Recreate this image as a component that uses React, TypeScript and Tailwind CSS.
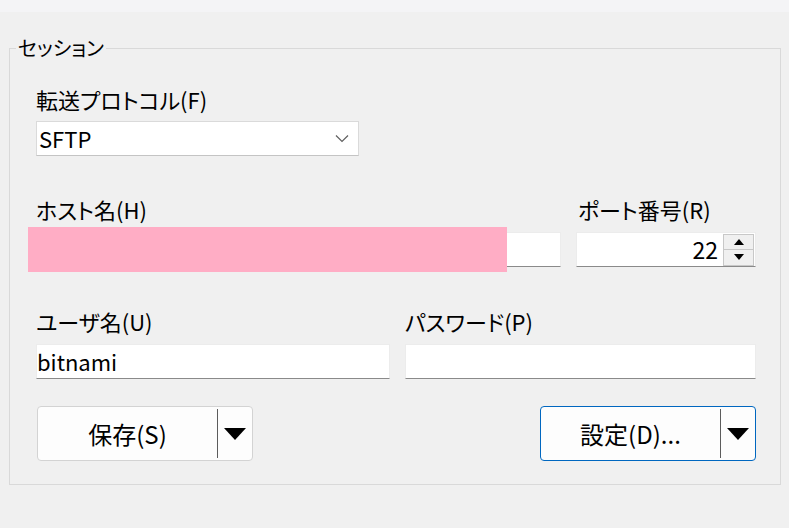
import React from "react";

const font = {
  fontFamily: '"Noto Sans CJK JP", "Noto Sans", sans-serif',
};

function Label({ children }: { children: React.ReactNode }) {
  return (
    <div className="h-[24px] whitespace-nowrap text-[22px] leading-[24px] text-black [font-feature-settings:'palt']">
      {children}
    </div>
  );
}

function TextBox({
  value,
  className,
}: {
  value?: string;
  className?: string;
}) {
  return (
    <div
      className={
        "flex h-[35px] items-center border border-[#ececec] border-b-[#8a8a8a] bg-white px-0 text-[22px] text-black " +
        (className ?? "")
      }
    >
      {value}
    </div>
  );
}

function SplitButton({
  label,
  focused,
}: {
  label: string;
  focused?: boolean;
}) {
  return (
    <button
      className={
        "flex h-[55px] w-[216px] items-stretch rounded-[4px] border bg-[#fdfdfd] " +
        (focused ? "border-[#0067c0]" : "border-[#d3d3d3]")
      }
    >
      <span className="flex flex-1 items-center justify-center text-[24px] text-black [font-feature-settings:'palt']">
        {label}
      </span>
      <span className="my-[2px] w-[1px] bg-[#5c5c5c]" />
      <span className="flex w-[34px] items-center justify-center">
        <svg width="22" height="12" viewBox="0 0 22 12">
          <path d="M0 0 H22 L11 12 Z" fill="#000" />
        </svg>
      </span>
    </button>
  );
}

export default function App() {
  return (
    <div className="h-[528px] w-[789px] overflow-hidden bg-[#f0f0f0]" style={font}>
      <div className="h-[12px] bg-[#f4f4f6]" />
      <fieldset className="mx-[9px] mt-[24px] w-[772px] border border-[#d9d9d9] p-0">
        <legend className="ml-[6px] px-[2px] text-[20px] leading-[24px] text-black [font-feature-settings:'palt']">
          セッション
        </legend>
        <div className="flex flex-col pb-[23px] pl-[26px] pr-[24px] pt-[27px]">
          <Label>転送プロトコル(F)</Label>
          <div className="mt-[10px] flex h-[35px] w-[323px] items-center justify-between border border-[#dadada] border-b-[#c4c4c4] bg-white pl-[2px] pr-[9px] text-[22px] text-black">
            <span>SFTP</span>
            <svg width="14" height="9" viewBox="0 0 14 9">
              <path d="M1 1.5 L7 7.5 L13 1.5" fill="none" stroke="#5f5f5f" strokeWidth="1.2" />
            </svg>
          </div>

          <div className="mt-[41px] flex gap-[15px]">
            <div className="flex w-[525px] flex-col gap-[11px]">
              <Label>ホスト名(H)</Label>
              <div className="relative">
                <TextBox />
                <div className="absolute left-[-8px] top-[-5px] h-[45px] w-[479px] bg-[#ffadc5]" />
              </div>
            </div>
            <div className="flex w-[180px] flex-col gap-[11px]">
              <div className="pl-[2px]">
                <Label>ポート番号(R)</Label>
              </div>
              <div className="flex h-[35px] items-center border border-[#ececec] border-b-[#8a8a8a] bg-white pr-[1px]">
                <span className="flex-1 pr-[5px] text-right text-[23px] text-black">22</span>
                <div className="flex w-[31px] flex-col">
                  <span className="flex h-[16px] items-center justify-center border border-[#c8c8c8] bg-[#f0f0f0]">
                    <svg width="10" height="6" viewBox="0 0 10 6">
                      <path d="M0 6 L5 0 L10 6 Z" fill="#000" />
                    </svg>
                  </span>
                  <span className="flex h-[16px] items-center justify-center border border-t-0 border-[#c8c8c8] bg-[#f0f0f0]">
                    <svg width="10" height="6" viewBox="0 0 10 6">
                      <path d="M0 0 L10 0 L5 6 Z" fill="#000" />
                    </svg>
                  </span>
                </div>
              </div>
            </div>
          </div>

          <div className="mt-[42px] flex gap-[15px]">
            <div className="flex w-[354px] flex-col gap-[11px]">
              <Label>ユーザ名(U)</Label>
              <TextBox value="bitnami" />
            </div>
            <div className="flex w-[351px] flex-col gap-[11px]">
              <Label>パスワード(P)</Label>
              <TextBox />
            </div>
          </div>

          <div className="mt-[27px] flex justify-between pl-[1px]">
            <SplitButton label="保存(S)" />
            <SplitButton label="設定(D)..." focused />
          </div>
        </div>
      </fieldset>
    </div>
  );
}
